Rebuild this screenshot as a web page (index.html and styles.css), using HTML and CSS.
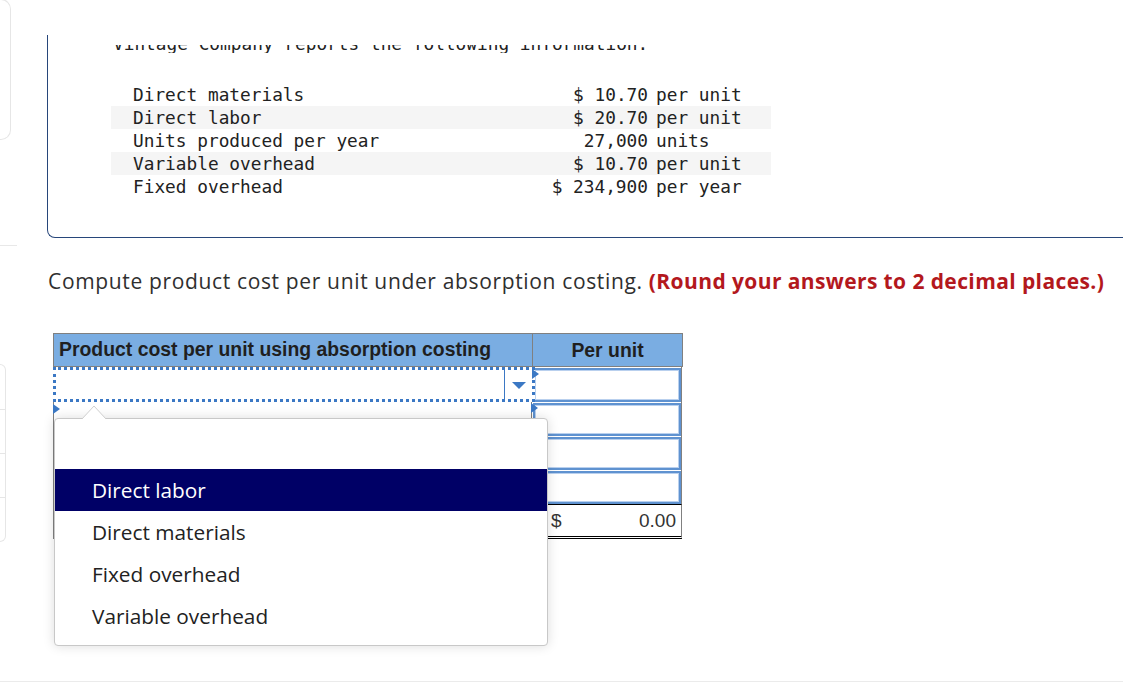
FILE: index.html
```html
<!DOCTYPE html>
<html lang="en">
<head>
<meta charset="utf-8">
<title>Absorption costing</title>
<link rel="stylesheet" href="styles.css">
</head>
<body>
<div class="page">
  <aside class="rail">
    <div class="rail-card"></div>
    <div class="rail-line"></div>
    <div class="rail-list">
      <div class="rail-item"></div>
      <div class="rail-item"></div>
      <div class="rail-item"></div>
      <div class="rail-item"></div>
    </div>
  </aside>
  <main class="main">
    <div class="scroller">
      <div class="card">
        <div class="intro-clip"><p class="intro">Vintage Company reports the following information.</p></div>
        <div class="data">
          <div class="drow"><span class="dl">Direct materials</span><span class="dv">$ 10.70</span><span class="du">per unit</span></div>
          <div class="drow alt"><span class="dl">Direct labor</span><span class="dv">$ 20.70</span><span class="du">per unit</span></div>
          <div class="drow"><span class="dl">Units produced per year</span><span class="dv">27,000</span><span class="du">units</span></div>
          <div class="drow alt"><span class="dl">Variable overhead</span><span class="dv">$ 10.70</span><span class="du">per unit</span></div>
          <div class="drow"><span class="dl">Fixed overhead</span><span class="dv">$ 234,900</span><span class="du">per year</span></div>
        </div>
      </div>
    </div>

    <p class="instruction">Compute product cost per unit under absorption costing. <strong class="hint">(Round your answers to 2 decimal places.)</strong></p>

    <div class="answer">
      <div class="ahead">
        <div class="h1">Product cost per unit using absorption costing</div>
        <div class="h2">Per unit</div>
      </div>
      <div class="abody">
        <div class="arow r1">
          <div class="c1 select">
            <span class="sel-btn"><span class="caret"></span></span>
          </div>
          <div class="c2"><span class="focus-arrow fa-right"></span><div class="inp"></div></div>
        </div>
        <div class="arow">
          <div class="c1"><span class="focus-arrow fa-left"></span></div>
          <div class="c2"><span class="focus-arrow fa-right2"></span><div class="inp"></div></div>
        </div>
        <div class="arow">
          <div class="c1"></div>
          <div class="c2"><div class="inp"></div></div>
        </div>
        <div class="arow">
          <div class="c1"></div>
          <div class="c2"><div class="inp"></div></div>
        </div>
        <div class="arow total">
          <div class="c1"></div>
          <div class="c2 tot"><span class="cur">$</span><span class="amt">0.00</span></div>
        </div>
      </div>

      <div class="popup">
        <svg class="notch" width="26" height="14" viewBox="0 0 26 14"><polygon points="1,14 13,1 25,14" fill="#ffffff" stroke="#cfcfcf" stroke-width="1"/><rect x="2" y="13" width="22" height="2" fill="#ffffff"/></svg>
        <ul class="options">
          <li class="opt blank"></li>
          <li class="opt sel">Direct labor</li>
          <li class="opt">Direct materials</li>
          <li class="opt">Fixed overhead</li>
          <li class="opt">Variable overhead</li>
        </ul>
      </div>
    </div>
  </main>
</div>
</body>
</html>
```

FILE: styles.css
```css
* { box-sizing: border-box; }
html, body { margin: 0; padding: 0; background: #ffffff; }
body { font-family: "Open Sans", "Liberation Sans", sans-serif; color: #2f2f2f; }

.page {
  display: flex;
  height: 682px;
  border-bottom: 1px solid #ebebeb;
  overflow: hidden;
}

/* left rail (faint, partially visible panel) */
.rail { width: 47px; flex-shrink: 0; display: flex; flex-direction: column; }
.rail-card {
  width: 11px; height: 141px; margin-top: -1px;
  border: 1px solid #e6e6e6; border-left: none;
  border-radius: 0 10px 10px 0;
}
.rail-line { margin-top: 105px; width: 17px; height: 1px; background: #e8e8e8; }
.rail-list {
  margin-top: 118px; width: 6px;
  border: 1px solid #e6e6e6; border-left: none;
  border-radius: 0 6px 6px 0;
}
.rail-item { height: 44px; border-top: 1px solid #e6e6e6; }
.rail-item:first-child { border-top: none; }

.main { flex: 1; min-width: 0; }

/* information card */
.scroller { margin-top: 35px; height: 203px; overflow: hidden; }
.card {
  border-left: 1px solid #27467a;
  border-bottom: 1px solid #27467a;
  border-radius: 0 0 0 8px;
  padding: 10px 0 39px 0;
  font-family: "DejaVu Sans Mono", "Liberation Mono", monospace;
  font-size: 17.8px;
  color: #222;
}
.intro-clip { height: 8px; overflow: hidden; padding-left: 65px; }
.intro { margin: -13px 0 0 0; line-height: 23px; white-space: nowrap; }
.data { margin: 30px 0 0 63px; width: 660px; }
.drow {
  display: grid;
  grid-template-columns: 429px 108px 123px;
  height: 23px; line-height: 23px;
  white-space: pre;
}
.drow.alt { background: #f5f5f5; }
.dl { padding-left: 22px; }
.dv { text-align: right; }
.du { padding-left: 8px; }

/* instruction */
.instruction {
  margin: 29px 0 0 1px;
  font-size: 21px; line-height: 28px;
  letter-spacing: 0.65px;
  color: #2f2f2f; white-space: nowrap;
}
.hint { color: #b3181d; font-weight: 700; letter-spacing: 0.4px; }

/* answer table */
.answer { position: relative; margin: 38px 0 0 6px; width: 630px; font-family: "Liberation Sans", Arial, sans-serif; }
.ahead {
  display: flex; height: 34px;
  border: 1px solid #808080;
  background: #7aade2;
  color: #1f1f1f; font-weight: 700; font-size: 19.4px;
}
.h1 { width: 479px; border-right: 1px solid #808080; padding: 4px 0 0 5px; white-space: nowrap; }
.h2 { flex: 1; text-align: center; padding-top: 5px; }

.abody { border-left: 1px solid #808080; }
.arow { display: flex; height: 34px; }
.arow.r1 { height: 35px; }
.arow.total { height: 35px; }
.c1 { position: relative; width: 478px; flex-shrink: 0; border-right: 1px solid #808080; }
.c2 { position: relative; width: 150px; flex-shrink: 0; border-right: 1px solid #808080; padding: 1px 0 0 1px; }

.select {
  margin-left: -1px; width: 482px;
  border: 3px dotted #3b78c4;
  display: flex; justify-content: flex-end;
  background: #fff;
  margin-right: -3px;
  position: relative; z-index: 1;
}
.sel-btn {
  width: 28px; height: 31px;
  border-left: 1px solid #3b78c4;
  display: flex; align-items: center; justify-content: center;
  margin-top: -2px;
}
.caret {
  width: 0; height: 0;
  border-left: 7px solid transparent;
  border-right: 7px solid transparent;
  border-top: 7px solid #3b78c4;
  margin-top: 3px;
}

.inp {
  height: 100%;
  border: 2px solid #5f92d0;
  box-shadow: inset 0 0 0 1px #b9d0ee;
  background: #fff;
}

.focus-arrow {
  position: absolute; width: 0; height: 0;
  border-top: 5px solid transparent;
  border-bottom: 5px solid transparent;
  border-left: 7px solid #3b78c4;
  z-index: 2;
}
.fa-right { left: 0; top: 2px; }
.fa-right2 { left: -1px; top: 1px; }
.fa-left { left: -1px; top: 2px; }

.tot {
  border-top: 1px solid #000;
  border-bottom: 3px double #000;
  display: flex; justify-content: space-between; align-items: center;
  padding: 0 5px 0 19px;
  font-size: 19px; color: #333;
}

/* dropdown popup */
.popup {
  position: absolute; left: 1px; top: 85px;
  width: 494px; height: 228px;
  background: #fff;
  border: 1px solid #c8c8c8;
  border-radius: 4px;
  box-shadow: 0 0 12px rgba(0, 0, 0, 0.14);
  z-index: 3;
}
.notch { position: absolute; left: 26px; top: -14px; display: block; }
.options { list-style: none; margin: 0; padding: 8px 0; }
.opt {
  height: 42px; line-height: 42px;
  padding-left: 37px;
  font-family: "Open Sans", "Noto Sans", sans-serif;
  font-size: 20.8px; color: #222;
}
.opt.sel { background: #000066; color: #fff; }
```
